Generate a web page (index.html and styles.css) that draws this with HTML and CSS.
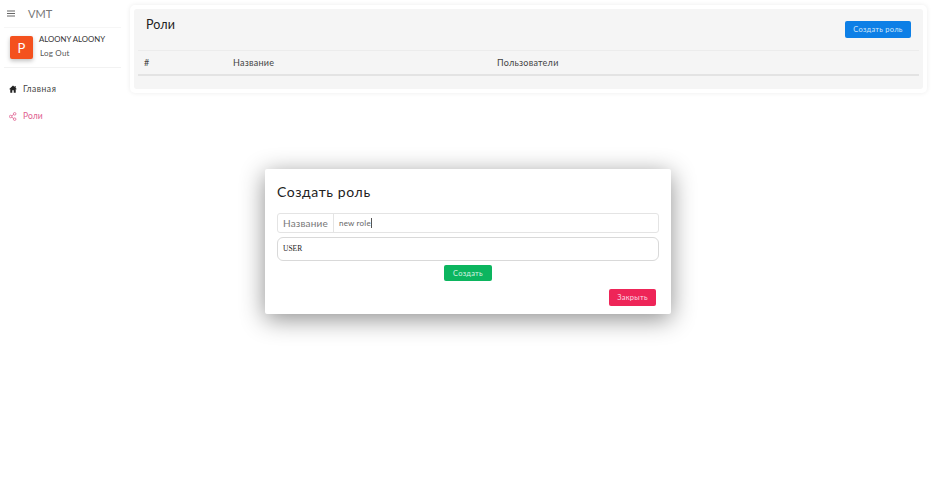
FILE: index.html
```html
<!DOCTYPE html>
<html lang="ru">
<head>
<meta charset="utf-8">
<title>VMT</title>
<link rel="stylesheet" href="styles.css">
</head>
<body>
<div class="app">
  <aside class="sidebar">
    <div class="brand">
      <svg class="burger" width="8" height="7" viewBox="0 0 8 7"><path d="M0 1h8M0 3.500h8M0 6h8" stroke="#666" stroke-width="1"/></svg>
      <span class="brand-name">VMT</span>
    </div>
    <div class="user">
      <div class="avatar">P</div>
      <div class="user-info">
        <div class="user-name">ALOONY ALOONY</div>
        <div class="logout">Log Out</div>
      </div>
    </div>
    <nav class="nav">
      <a class="nav-item">
        <svg class="nav-icon" width="8" height="8" viewBox="0 0 12 12"><path d="M6 .8 0 6.400h1.900V11.500h3V8h2.200v3.500h3V6.400H12L10 4.500V1.500H8.500v1.600z" fill="#222"/></svg>
        <span>Главная</span>
      </a>
      <a class="nav-item active">
        <svg class="nav-icon" width="8" height="9" viewBox="0 0 12 13" fill="none" stroke="#e0608f" stroke-width="1.200"><circle cx="8.500" cy="2.500" r="1.900"/><circle cx="2.500" cy="6.500" r="1.900"/><circle cx="8.500" cy="10.500" r="1.900"/><path d="M4.200 5.500 7 3.500M4.200 7.500 7 9.500"/></svg>
        <span>Роли</span>
      </a>
    </nav>
  </aside>
  <main class="main">
    <section class="panel">
      <div class="panel-inner">
        <header class="panel-head">
          <h1 class="panel-title">Роли</h1>
          <button class="btn btn-blue btn-create-role">Создать роль</button>
        </header>
        <div class="table-head">
          <div class="col col-id">#</div>
          <div class="col col-name">Название</div>
          <div class="col col-users">Пользователи</div>
        </div>
      </div>
    </section>
  </main>
</div>
<div class="modal">
  <h2 class="modal-title">Создать роль</h2>
  <div class="field">
    <span class="field-label">Название</span>
    <span class="field-value">new role<i class="caret"></i></span>
  </div>
  <div class="select">USER</div>
  <div class="modal-action"><button class="btn btn-green">Создать</button></div>
  <div class="modal-foot"><button class="btn btn-red">Закрыть</button></div>
</div>
</body>
</html>
```

FILE: styles.css
```css
* { box-sizing: border-box; }
html, body { margin: 0; height: 100%; }
body {
  background: #fff;
  font-family: "Lato", "Noto Sans", sans-serif;
  color: #333;
  overflow: hidden;
}
.app { display: flex; min-height: 485px; }
.sidebar { width: 125px; flex: none; padding: 0 4px; }
.brand {
  height: 28px;
  display: flex;
  align-items: center;
  padding-left: 3px;
  gap: 13px;
  border-bottom: 1px solid #f6f6f6;
}
.burger { flex: none; }
.brand-name { font-size: 11px; color: #777; letter-spacing: .1px; }
.user {
  height: 40px;
  display: flex;
  padding: 8px 0 0 6px;
  gap: 6px;
  border-bottom: 1px solid #f2f2f2;
}
.avatar {
  width: 23px;
  height: 23px;
  border-radius: 2px;
  background: #f4511e;
  color: #fff;
  font-size: 13px;
  display: flex;
  align-items: center;
  justify-content: center;
  box-shadow: 0 2px 4px rgba(0,0,0,.25);
}
.user-name { font-size: 7.800px; line-height: 9px; color: #333; white-space: nowrap; margin-top: -1px; }
.logout { font-size: 8px; line-height: 10px; color: #555; margin-top: 4px; margin-left: 1px; letter-spacing: .2px; }
.nav { padding: 15px 0 0 5px; }
.nav-item {
  display: flex;
  align-items: center;
  gap: 6px;
  height: 12px;
  margin-bottom: 15px;
  font-size: 8.500px;
  color: #444;
  letter-spacing: .55px;
}
.nav-item.active { color: #e0608f; letter-spacing: .1px; }
.nav-icon { flex: none; }
.main { flex: 1; padding: 5px 8px 0 5px; }
.panel {
  background: #fff;
  border-radius: 5px;
  padding: 4px;
  box-shadow: 0 0 5px rgba(0,0,0,.08);
  height: 88px;
}
.panel-inner { background: #f5f5f5; border-radius: 3px; height: 80px; padding: 0 4px; }
.panel-head {
  height: 42px;
  display: flex;
  justify-content: space-between;
  padding: 8px 8px 0 8px;
  border-bottom: 1px solid #ececec;
}
.panel-title { margin: 0; font-size: 12.500px; line-height: 16px; font-weight: 400; color: #222; letter-spacing: .1px; }
.table-head {
  display: flex;
  height: 25px;
  align-items: center;
  font-size: 9px;
  color: #444;
  border-bottom: 2px solid #e3e3e3;
  letter-spacing: .25px;
}
.col-id { width: 95px; padding-left: 6px; }
.col-name { width: 264px; }
.btn {
  border: 0;
  border-radius: 2px;
  color: #fff;
  font-family: inherit;
  font-size: 7.500px;
  letter-spacing: .25px;
  padding: 0;
}
.btn-create-role { margin-top: 4px; width: 66px; height: 17px; }
.btn-blue { background: #0d7fe6; color: #cfe6fb; }
.btn-green { background: #0cb55f; width: 48px; height: 16px; color: #d5f3e2; }
.btn-red { background: #ee2558; width: 47px; height: 17px; color: #fbd8e2; }
.modal {
  position: absolute;
  left: 265px;
  top: 169px;
  width: 406px;
  height: 145px;
  background: #fff;
  padding: 15px 12px 0;
  border-radius: 2px;
  box-shadow: 0 5px 25px rgba(0,0,0,.45);
}
.modal-title { margin: 0; font-size: 14px; line-height: 15px; font-weight: 400; color: #222; letter-spacing: .6px; }
.field {
  margin-top: 14px;
  height: 20px;
  display: flex;
  border: 1px solid #e4e4e4;
  border-radius: 3px;
}
.field-label {
  width: 56px;
  border-right: 1px solid #e4e4e4;
  font-size: 10px;
  line-height: 18px;
  color: #777;
  text-align: center;
  letter-spacing: .15px;
}
.field-value { padding-left: 5px; font-size: 8px; line-height: 18px; color: #666; display: flex; align-items: center; letter-spacing: .2px; }
.caret { display: inline-block; width: 1px; height: 10px; background: #555; }
.select {
  margin-top: 4px;
  height: 24px;
  border: 1px solid #d9d9d9;
  border-radius: 6px;
  padding-left: 5px;
  font-family: "Liberation Serif", serif;
  font-size: 7.500px;
  line-height: 22px;
  color: #222;
}
.modal-action { display: flex; justify-content: center; margin-top: 4px; }
.modal-foot { display: flex; justify-content: flex-end; margin-top: 8px; padding-right: 3px; }
```
